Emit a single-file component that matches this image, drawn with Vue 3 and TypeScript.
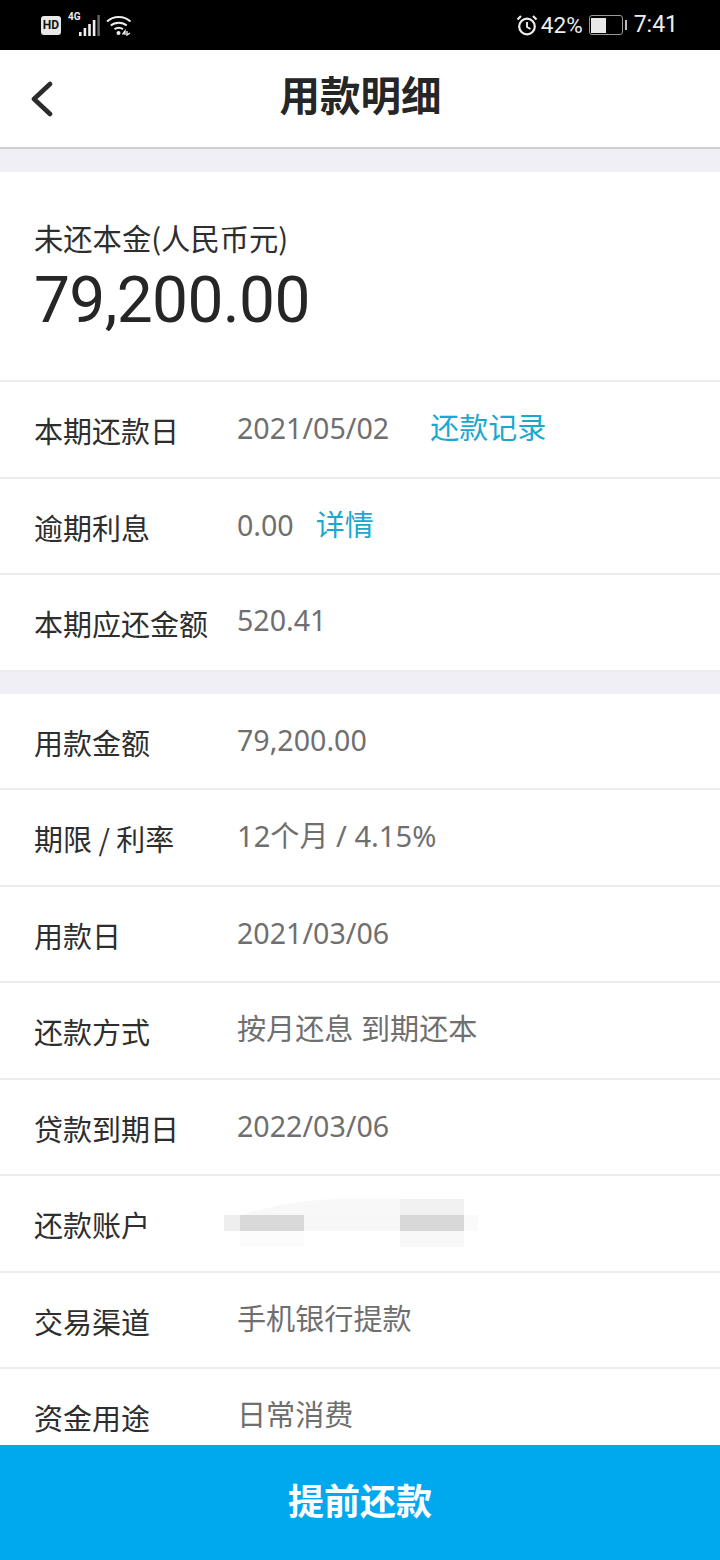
<script setup lang="ts">
interface Row { label: string; value?: string; link?: string; linkGap?: number; blur?: boolean; cjk?: boolean }
const top: Row[] = [
  { label: '本期还款日', value: '2021/05/02', link: '还款记录', linkGap: 41 },
  { label: '逾期利息', value: '0.00', link: '详情', linkGap: 22 },
  { label: '本期应还金额', value: '520.41' },
]
const bottom: Row[] = [
  { label: '用款金额', value: '79,200.00' },
  { label: '期限 / 利率', value: '12个月 / 4.15%', cjk: true },
  { label: '用款日', value: '2021/03/06' },
  { label: '还款方式', value: '按月还息 到期还本', cjk: true },
  { label: '贷款到期日', value: '2022/03/06' },
  { label: '还款账户', blur: true },
  { label: '交易渠道', value: '手机银行提款', cjk: true },
  { label: '资金用途', value: '日常消费', cjk: true },
]
</script>

<template>
  <div class="page">
    <div class="status">
      <div class="status-left">
        <span class="hd">HD</span>
        <span class="net">4G</span>
        <svg class="signal" width="21" height="21" viewBox="0 0 21 21">
          <rect x="0" y="17" width="2.6" height="4" fill="#eee" />
          <rect x="4.6" y="13" width="2.6" height="8" fill="#eee" />
          <rect x="9.2" y="9" width="2.6" height="12" fill="#eee" />
          <rect x="13.8" y="5" width="2.6" height="16" fill="#eee" />
          <rect x="18.4" y="0" width="2.4" height="21" fill="#666" />
        </svg>
        <svg class="wifi" width="26" height="21" viewBox="0 0 26 21" fill="none" stroke="#eee" stroke-width="2">
          <path d="M1 6.5 C7.5 0.5 18 0.5 24.5 6.5" />
          <path d="M4.8 10.5 C9 6.8 16.5 6.8 20.7 10.5" />
          <path d="M8.5 14.2 C11 12.6 14.5 12.6 17 14.2" />
          <circle cx="12.5" cy="18" r="2" fill="#eee" stroke="none" />
          <path d="M16.5 19.5 L19 16 V20 M21 16 V20 L24 18" stroke-width="1.4" />
        </svg>
      </div>
      <div class="status-right">
        <svg width="22" height="22" viewBox="0 0 22 22" fill="none" stroke="#eee" stroke-width="2.2">
          <circle cx="11" cy="12.5" r="7.8" />
          <path d="M11 8 V13 L14.5 15" stroke-width="1.9" />
          <path d="M1.5 5.5 L5 2 M20.5 5.5 L17 2" />
        </svg>
        <span class="pct">42%</span>
        <span class="battery"><span class="level"></span></span>
        <span class="cap"></span>
        <span class="time">7:41</span>
      </div>
    </div>

    <header class="nav">
      <svg class="back" width="24" height="36" viewBox="0 0 24 36" fill="none" stroke="#2b2b2b" stroke-width="4.6" stroke-linecap="round" stroke-linejoin="round">
        <path d="M20 3 L4 18 L20 33" />
      </svg>
      <h1>用款明细</h1>
    </header>

    <main class="content">
      <div class="band first"></div>
      <section class="hero">
        <div class="hero-label">未还本金(人民币元)</div>
        <div class="hero-amount">79,200.00</div>
      </section>

      <div v-for="r in top" :key="r.label" class="row upper">
        <span class="label">{{ r.label }}</span>
        <span class="value">{{ r.value }}<span v-if="r.link" class="link" :style="{ marginLeft: r.linkGap + 'px' }">{{ r.link }}</span></span>
      </div>
      <div class="band"></div>
      <div v-for="r in bottom" :key="r.label" class="row">
        <span class="label">{{ r.label }}</span>
        <span v-if="r.value" class="value" :class="{ cjk: r.cjk }">{{ r.value }}</span>
        <svg v-if="r.blur" class="smudge" width="260" height="72" viewBox="0 0 260 72">
          <defs>
            <filter id="soft" x="-5%" y="-10%" width="110%" height="120%"><feGaussianBlur stdDeviation="0.7" /></filter>
          </defs>
          <g filter="url(#soft)">
            <path d="M16 16 Q70 0 120 0 H240 V17 H16 Z" fill="#f8f8f8" />
            <rect x="176" y="0" width="64" height="16" fill="#f1f1f1" />
            <rect x="0" y="16" width="16" height="16" fill="#eeeeee" />
            <rect x="16" y="16" width="64" height="16" fill="#d9d9d9" />
            <rect x="80" y="16" width="96" height="16" fill="#f7f7f7" />
            <rect x="176" y="16" width="64" height="16" fill="#d8d8d8" />
            <rect x="240" y="16" width="14" height="16" fill="#fafafa" />
            <rect x="176" y="32" width="64" height="16" fill="#f8f8f8" />
            <rect x="16" y="32" width="64" height="16" fill="#fcfcfc" />
          </g>
        </svg>
      </div>
    </main>

    <button class="cta"><span>提前还款</span></button>
  </div>
</template>

<style>
html, body { margin: 0; background: #fff; }
</style>

<style scoped>
.page {
  width: 720px;
  height: 1560px;
  display: flex;
  flex-direction: column;
  overflow: hidden;
  background: #fff;
  font-family: "Noto Sans CJK SC", "Noto Sans", sans-serif;
}
.status {
  height: 50px;
  flex: none;
  background: #000;
  color: #eee;
  display: flex;
  align-items: center;
  justify-content: space-between;
  padding: 0 42px 0 41px;
}
.status-left, .status-right { display: flex; align-items: center; }
.hd {
  width: 20px;
  height: 19px;
  background: #e8e8e8;
  color: #111;
  border-radius: 3px;
  font: 700 12px/19px "Roboto", sans-serif;
  text-align: center;
}
.net {
  font: 700 10px/10px "Roboto", sans-serif;
  margin: -16px 0 0 7px;
  width: 11px;
  white-space: nowrap;
}
.wifi { margin-left: 6px; }
.status-right svg { margin-right: 2px; }
.pct, .time { font: 400 23px/28px "Roboto", sans-serif; color: #eee; }
.pct { margin-left: 1px; font-size: 22.5px; }
.battery {
  width: 34px;
  height: 20px;
  box-sizing: border-box;
  margin-left: 6px;
  border: 1.5px solid #999;
  border-radius: 3px;
  padding: 1.5px;
  display: flex;
}
.level { width: 15px; background: #e8e8e8; }
.cap { width: 2px; height: 10px; margin-left: 2px; background: #bbb; }
.time { margin-left: 7px; }

.nav {
  height: 97px;
  flex: none;
  border-bottom: 2px solid #cfcfd3;
  position: relative;
  display: flex;
  align-items: center;
  justify-content: center;
}
.nav h1 {
  margin: -4px 0 0 1px;
  padding-bottom: 4px;
  font-size: 40.5px;
  font-weight: 700;
  line-height: 1;
  color: #262626;
}
.back { position: absolute; left: 30px; top: 31px; }

.content { flex: 1; min-height: 0; overflow: hidden; }
.band { height: 22px; background: #efeff5; }
.band.first { height: 23px; }
.hero {
  padding: 44px 34px 0;
  box-sizing: border-box;
  border-bottom: 2px solid #ececec;
  height: 210px;
}
.hero-label { font-size: 29.3px; line-height: 42px; color: #2e2e2e; }
.hero-amount {
  font-family: "Roboto", sans-serif;
  font-size: 64px;
  letter-spacing: -0.6px;
  line-height: 80px;
  color: #262626;
  margin-top: 3px;
}
.row {
  height: 96.5px;
  box-sizing: border-box;
  border-bottom: 2px solid #ececec;
  display: flex;
  align-items: center;
  padding: 2px 0 0 34px;
  position: relative;
}
.label { width: 203px; flex: none; font-size: 29px; color: #2e2e2e; line-height: 40px; white-space: nowrap; }
.value {
  font-size: 28.6px;
  line-height: 40px;
  color: #6f6f6f;
  margin-top: -4px;
  white-space: nowrap;
  font-family: "Noto Sans", "Noto Sans CJK SC", sans-serif;
}
.value.cjk { font-size: 29.1px; }
.upper .value { margin-top: -6px; }
.link { color: #1ba8cf; font-family: "Noto Sans CJK SC", sans-serif; font-size: 29px; }
.smudge { position: absolute; left: 224px; top: 23px; }
.cta {
  flex: none;
  height: 115px;
  width: 100%;
  border: 0;
  padding: 0 0 8px;
  background: #00a9ee;
  color: #fff;
  font-family: inherit;
  font-size: 36px;
  font-weight: 700;
}
</style>
